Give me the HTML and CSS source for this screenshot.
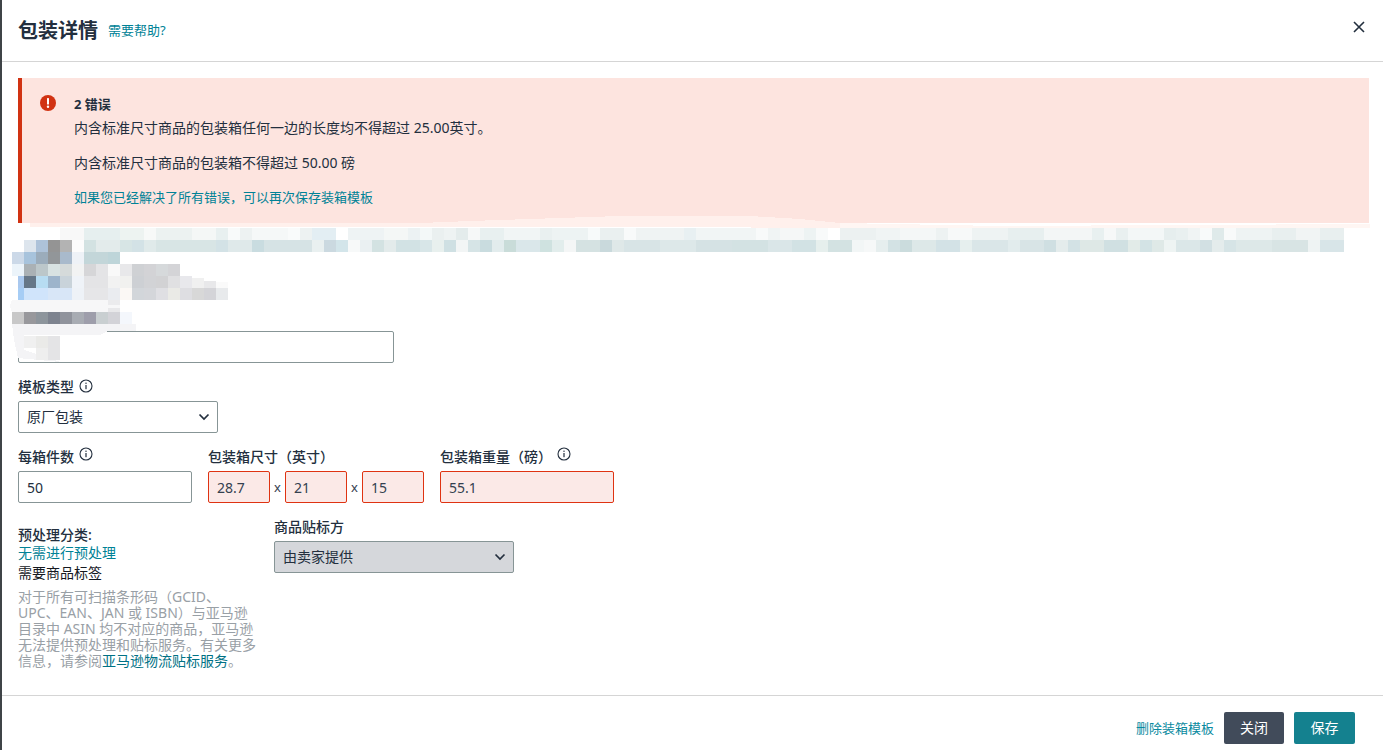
FILE: index.html
```html
<!DOCTYPE html>
<html lang="zh-CN">
<head>
<meta charset="utf-8">
<title>包装详情</title>
<link rel="stylesheet" href="styles.css">
</head>
<body>
<div class="modal">
  <header class="modal-head">
    <h1 class="modal-title">包装详情</h1>
    <a class="link help-link">需要帮助?</a>
    <svg class="close-icon" width="14" height="14" viewBox="0 0 14 14"><path d="M2 2l10 10M12 2L2 12" fill="none" stroke="#232f3e" stroke-width="1.6"/></svg>
  </header>
  <main class="modal-body">
    <section class="alert">
      <svg class="alert-icon" width="16" height="16" viewBox="0 0 16 16"><circle cx="8" cy="8" r="8" fill="#d13212"/><rect x="7" y="3" width="2" height="6.5" rx="0.6" fill="#fff"/><circle cx="8" cy="11.8" r="1.2" fill="#fff"/></svg>
      <div class="alert-text">
        <strong class="alert-title">2 错误</strong>
        <p class="alert-line">内含标准尺寸商品的包装箱任何一边的长度均不得超过 25.00英寸。</p>
        <p class="alert-line spaced">内含标准尺寸商品的包装箱不得超过 50.00 磅</p>
        <a class="link alert-link">如果您已经解决了所有错误&#xFF0C;可以再次保存装箱模板</a>
      </div>
    </section>

    <input class="field name-field" type="text" aria-label="模板名称">

    <div class="label type-label">模板类型
      <svg class="info" width="14" height="14" viewBox="0 0 14 14"><circle cx="7" cy="7" r="6" fill="none" stroke="#232f3e" stroke-width="1.1"/><rect x="6.4" y="6" width="1.2" height="4.2" fill="#232f3e"/><rect x="6.4" y="3.6" width="1.2" height="1.3" fill="#232f3e"/></svg>
    </div>
    <div class="select type-select">
      <span>原厂包装</span>
      <svg width="12" height="8" viewBox="0 0 12 8"><path d="M1.5 1.5L6 6l4.5-4.5" fill="none" stroke="#232f3e" stroke-width="1.7"/></svg>
    </div>

    <div class="measure-row">
      <div class="measure count">
        <div class="label">每箱件数
          <svg class="info" width="14" height="14" viewBox="0 0 14 14"><circle cx="7" cy="7" r="6" fill="none" stroke="#232f3e" stroke-width="1.1"/><rect x="6.4" y="6" width="1.2" height="4.2" fill="#232f3e"/><rect x="6.4" y="3.6" width="1.2" height="1.3" fill="#232f3e"/></svg>
        </div>
        <input class="field full" type="text" value="50" aria-label="每箱件数">
      </div>
      <div class="measure dims">
        <div class="label">包装箱尺寸&#xFF08;英寸&#xFF09;</div>
        <div class="dim-inputs">
          <input class="field error dim" type="text" value="28.7" aria-label="长">
          <span class="times">x</span>
          <input class="field error dim" type="text" value="21" aria-label="宽">
          <span class="times">x</span>
          <input class="field error dim" type="text" value="15" aria-label="高">
        </div>
      </div>
      <div class="measure weight">
        <div class="label">包装箱重量&#xFF08;磅&#xFF09;
          <svg class="info" width="14" height="14" viewBox="0 0 14 14"><circle cx="7" cy="7" r="6" fill="none" stroke="#232f3e" stroke-width="1.1"/><rect x="6.4" y="6" width="1.2" height="4.2" fill="#232f3e"/><rect x="6.4" y="3.6" width="1.2" height="1.3" fill="#232f3e"/></svg>
        </div>
        <input class="field error full" type="text" value="55.1" aria-label="包装箱重量">
      </div>
    </div>

    <div class="prep-row">
      <div class="prep">
        <div class="label">预处理分类:</div>
        <a class="link prep-link">无需进行预处理</a>
        <div class="prep-need">需要商品标签</div>
        <p class="prep-note">对于所有可扫描条形码&#xFF08;GCID、<br>UPC、EAN、JAN 或 ISBN&#xFF09;与亚马逊<br>目录中 ASIN 均不对应的商品&#xFF0C;亚马逊<br>无法提供预处理和贴标服务。有关更多<br>信息&#xFF0C;请参阅<a class="link note-link">亚马逊物流贴标服务</a>。</p>
      </div>
      <div class="labeler">
        <div class="label">商品贴标方</div>
        <div class="select labeler-select">
          <span>由卖家提供</span>
          <svg width="12" height="8" viewBox="0 0 12 8"><path d="M1.5 1.5L6 6l4.5-4.5" fill="none" stroke="#232f3e" stroke-width="1.7"/></svg>
        </div>
      </div>
    </div>
  </main>
  <footer class="modal-foot">
    <a class="link delete-link">删除装箱模板</a>
    <button class="btn btn-dark" type="button">关闭</button>
    <button class="btn btn-teal" type="button">保存</button>
  </footer>
  <svg class="mosaic" width="1383" height="750" viewBox="0 0 1383 750" aria-hidden="true">
    <path d="M30 223H420L470 221L620 216H750L800 219L840 223V229L800 228L700 227H30Z" fill="#fff0ec"/>
    <path d="M840 223L1000 226L1370 224V228H840Z" fill="#fff6f3"/>
    <g>
      <rect x="60" y="228" width="24" height="12" fill="#f8f8f8"/>
      <rect x="84" y="228" width="36" height="12" fill="#e6efef"/><rect x="120" y="228" width="24" height="12" fill="#edf3f1"/><rect x="144" y="228" width="12" height="12" fill="#f7f9f8"/><rect x="156" y="228" width="36" height="12" fill="#ecf2f1"/><rect x="192" y="228" width="24" height="12" fill="#f4f7f6"/><rect x="216" y="228" width="12" height="12" fill="#e8f0f0"/><rect x="228" y="228" width="12" height="12" fill="#f8fafa"/><rect x="240" y="228" width="12" height="12" fill="#edf2f2"/><rect x="252" y="228" width="36" height="12" fill="#f5f8f8"/><rect x="288" y="228" width="12" height="12" fill="#f9fbfb"/><rect x="300" y="228" width="12" height="12" fill="#edf2f2"/><rect x="312" y="228" width="24" height="12" fill="#e3eef3"/><rect x="336" y="228" width="12" height="12" fill="#ffffff"/><rect x="348" y="228" width="36" height="12" fill="#eef3f4"/><rect x="384" y="228" width="24" height="12" fill="#f4f7f6"/><rect x="408" y="228" width="12" height="12" fill="#ecf2f3"/>
      <rect x="420" y="228" width="12" height="12" fill="#f3f8f8"/><rect x="432" y="228" width="12" height="12" fill="#eaf0f0"/><rect x="444" y="228" width="12" height="12" fill="#eef3f3"/><rect x="456" y="228" width="12" height="12" fill="#e4ecec"/><rect x="468" y="228" width="12" height="12" fill="#f6f8f8"/><rect x="480" y="228" width="24" height="12" fill="#e8f0f0"/><rect x="504" y="228" width="36" height="12" fill="#f1f5f5"/><rect x="540" y="228" width="12" height="12" fill="#e9f0f0"/><rect x="552" y="228" width="36" height="12" fill="#edf3f3"/><rect x="588" y="228" width="12" height="12" fill="#f7fafa"/><rect x="600" y="228" width="24" height="12" fill="#eaf0f0"/><rect x="624" y="228" width="12" height="12" fill="#f8fafa"/><rect x="636" y="228" width="48" height="12" fill="#eff3f3"/><rect x="684" y="228" width="12" height="12" fill="#e8f0f2"/><rect x="696" y="228" width="60" height="12" fill="#f1f5f5"/><rect x="756" y="228" width="12" height="12" fill="#f8fafa"/><rect x="768" y="228" width="12" height="12" fill="#f0f4f4"/><rect x="780" y="228" width="24" height="12" fill="#f5f7f7"/><rect x="804" y="228" width="12" height="12" fill="#edf3f3"/><rect x="816" y="228" width="12" height="12" fill="#f8fafa"/><rect x="828" y="228" width="12" height="12" fill="#ffffff"/>
      <rect x="840" y="228" width="36" height="12" fill="#ecf1f1"/><rect x="876" y="228" width="24" height="12" fill="#f0f4f4"/><rect x="900" y="228" width="36" height="12" fill="#f4f7f7"/><rect x="936" y="228" width="12" height="12" fill="#edf2f2"/><rect x="948" y="228" width="24" height="12" fill="#f7f9f9"/><rect x="972" y="228" width="36" height="12" fill="#eef3f3"/><rect x="1008" y="228" width="36" height="12" fill="#e7efef"/><rect x="1044" y="228" width="48" height="12" fill="#f3f6f6"/><rect x="1092" y="228" width="12" height="12" fill="#e8f0f0"/><rect x="1104" y="228" width="12" height="12" fill="#f6f8f8"/><rect x="1116" y="228" width="12" height="12" fill="#e9f0f0"/><rect x="1128" y="228" width="36" height="12" fill="#f3f7f7"/><rect x="1164" y="228" width="12" height="12" fill="#e6eeee"/><rect x="1176" y="228" width="12" height="12" fill="#e9f0f0"/><rect x="1188" y="228" width="12" height="12" fill="#f0f4f4"/><rect x="1200" y="228" width="12" height="12" fill="#f8fafa"/><rect x="1212" y="228" width="12" height="12" fill="#dfeaea"/><rect x="1224" y="228" width="12" height="12" fill="#f8fafa"/><rect x="1236" y="228" width="36" height="12" fill="#eef3f3"/><rect x="1272" y="228" width="24" height="12" fill="#e8efef"/><rect x="1296" y="228" width="24" height="12" fill="#f1f4f4"/><rect x="1320" y="228" width="24" height="12" fill="#e8efef"/>

      <rect x="24" y="240" width="12" height="12" fill="#dde5ed"/><rect x="36" y="240" width="12" height="12" fill="#adc2d9"/><rect x="48" y="240" width="12" height="12" fill="#949494"/><rect x="60" y="240" width="12" height="12" fill="#b3b3b3"/><rect x="72" y="240" width="12" height="12" fill="#fcfcfc"/>
      <rect x="84" y="240" width="12" height="12" fill="#d3e2e2"/><rect x="96" y="240" width="24" height="12" fill="#e3ebeb"/><rect x="120" y="240" width="12" height="12" fill="#d7e5e5"/><rect x="132" y="240" width="12" height="12" fill="#d3e2e6"/><rect x="144" y="240" width="12" height="12" fill="#e0eaea"/><rect x="156" y="240" width="60" height="12" fill="#d8e5e5"/><rect x="216" y="240" width="12" height="12" fill="#d3e2e6"/><rect x="228" y="240" width="24" height="12" fill="#dfe9ea"/><rect x="252" y="240" width="12" height="12" fill="#c9dce0"/><rect x="264" y="240" width="48" height="12" fill="#d6e3e5"/><rect x="312" y="240" width="12" height="12" fill="#e9f0f0"/><rect x="324" y="240" width="12" height="12" fill="#cbd9e0"/><rect x="336" y="240" width="12" height="12" fill="#d3e5ea"/><rect x="348" y="240" width="12" height="12" fill="#f7f9f9"/><rect x="360" y="240" width="12" height="12" fill="#eaf0f2"/><rect x="372" y="240" width="12" height="12" fill="#d3e2e2"/><rect x="384" y="240" width="12" height="12" fill="#e3ebeb"/><rect x="396" y="240" width="24" height="12" fill="#d2e2e4"/>
      <rect x="420" y="240" width="12" height="12" fill="#d8e6e8"/><rect x="432" y="240" width="12" height="12" fill="#e8f0ee"/><rect x="444" y="240" width="12" height="12" fill="#cfe0e3"/><rect x="456" y="240" width="12" height="12" fill="#f2f5f5"/><rect x="468" y="240" width="12" height="12" fill="#d6e4e6"/><rect x="480" y="240" width="12" height="12" fill="#c9dcdf"/><rect x="492" y="240" width="12" height="12" fill="#e2eced"/><rect x="504" y="240" width="12" height="12" fill="#c9dcd9"/><rect x="516" y="240" width="24" height="12" fill="#dae7ea"/><rect x="540" y="240" width="12" height="12" fill="#cfe2e0"/><rect x="552" y="240" width="12" height="12" fill="#e2edec"/><rect x="564" y="240" width="12" height="12" fill="#f4f6f6"/><rect x="576" y="240" width="24" height="12" fill="#d5e2e2"/><rect x="600" y="240" width="12" height="12" fill="#c9d9dc"/><rect x="612" y="240" width="12" height="12" fill="#dfe8e8"/><rect x="624" y="240" width="36" height="12" fill="#d8e4e6"/><rect x="660" y="240" width="36" height="12" fill="#dde8e9"/><rect x="696" y="240" width="36" height="12" fill="#d5e2e4"/><rect x="732" y="240" width="36" height="12" fill="#d3e2e3"/><rect x="768" y="240" width="24" height="12" fill="#dae6e8"/><rect x="792" y="240" width="24" height="12" fill="#d2e2e4"/><rect x="816" y="240" width="12" height="12" fill="#e6efed"/><rect x="828" y="240" width="24" height="12" fill="#d3e2e2"/>
      <rect x="852" y="240" width="12" height="12" fill="#f2f6f6"/><rect x="864" y="240" width="12" height="12" fill="#f6f8f8"/><rect x="876" y="240" width="12" height="12" fill="#e6eeee"/><rect x="888" y="240" width="12" height="12" fill="#d3e2e4"/><rect x="900" y="240" width="12" height="12" fill="#cbdcdd"/><rect x="912" y="240" width="24" height="12" fill="#dde8e8"/><rect x="936" y="240" width="24" height="12" fill="#d3e2e6"/><rect x="960" y="240" width="12" height="12" fill="#e6efee"/><rect x="972" y="240" width="36" height="12" fill="#dae6e8"/><rect x="1008" y="240" width="12" height="12" fill="#e2eced"/><rect x="1020" y="240" width="24" height="12" fill="#d8e4e6"/><rect x="1044" y="240" width="12" height="12" fill="#cfdfe2"/><rect x="1056" y="240" width="12" height="12" fill="#e4ecec"/><rect x="1068" y="240" width="12" height="12" fill="#d3e2e5"/><rect x="1080" y="240" width="24" height="12" fill="#dee8e6"/><rect x="1104" y="240" width="24" height="12" fill="#d0e0e2"/><rect x="1128" y="240" width="12" height="12" fill="#e2ebe8"/><rect x="1140" y="240" width="12" height="12" fill="#d3e3e5"/><rect x="1152" y="240" width="12" height="12" fill="#dfe9e7"/><rect x="1164" y="240" width="12" height="12" fill="#eef4f3"/><rect x="1176" y="240" width="24" height="12" fill="#dbe7e8"/><rect x="1200" y="240" width="12" height="12" fill="#d2e0e3"/><rect x="1212" y="240" width="12" height="12" fill="#e4ecec"/><rect x="1224" y="240" width="12" height="12" fill="#d6e4e6"/><rect x="1236" y="240" width="36" height="12" fill="#dde8e8"/><rect x="1272" y="240" width="36" height="12" fill="#d8e4e4"/><rect x="1308" y="240" width="12" height="12" fill="#eef3f3"/><rect x="1320" y="240" width="24" height="12" fill="#d8e5e8"/>

      <rect x="12" y="252" width="12" height="12" fill="#ccd9e8"/><rect x="24" y="252" width="12" height="12" fill="#a7c3dc"/><rect x="36" y="252" width="12" height="12" fill="#9bacbb"/><rect x="48" y="252" width="12" height="12" fill="#929699"/><rect x="60" y="252" width="12" height="12" fill="#a9bacc"/><rect x="72" y="252" width="12" height="12" fill="#eef2f7"/><rect x="84" y="252" width="24" height="12" fill="#c3d6d9"/><rect x="108" y="252" width="12" height="12" fill="#bed5d9"/>

      <rect x="12" y="264" width="12" height="12" fill="#ecf4fa"/><rect x="24" y="264" width="12" height="12" fill="#aab1b5"/><rect x="36" y="264" width="12" height="12" fill="#bcc7ca"/><rect x="48" y="264" width="12" height="12" fill="#d8e2e2"/><rect x="60" y="264" width="12" height="12" fill="#d5dada"/><rect x="72" y="264" width="12" height="12" fill="#f2f3f3"/><rect x="84" y="264" width="12" height="12" fill="#d6d6d8"/><rect x="96" y="264" width="12" height="12" fill="#e4e4e6"/><rect x="108" y="264" width="12" height="12" fill="#f9f9f9"/><rect x="120" y="264" width="12" height="12" fill="#e8e8ea"/><rect x="132" y="264" width="12" height="12" fill="#cfd1d4"/><rect x="144" y="264" width="12" height="12" fill="#d3d3d6"/><rect x="156" y="264" width="12" height="12" fill="#d6d9db"/><rect x="168" y="264" width="12" height="12" fill="#d4d4d7"/>

      <rect x="18" y="276" width="6" height="12" fill="#a9c8ee"/><rect x="24" y="276" width="12" height="12" fill="#667788"/><rect x="36" y="276" width="12" height="12" fill="#b7dcf2"/><rect x="48" y="276" width="12" height="12" fill="#9db4cb"/><rect x="60" y="276" width="12" height="12" fill="#c9d3da"/><rect x="72" y="276" width="12" height="12" fill="#eff3f8"/><rect x="84" y="276" width="24" height="12" fill="#e4e4e6"/><rect x="108" y="276" width="12" height="12" fill="#f2f2f2"/><rect x="120" y="276" width="12" height="12" fill="#f1f1ef"/><rect x="132" y="276" width="12" height="12" fill="#cdd0d4"/><rect x="144" y="276" width="12" height="12" fill="#d2d3d6"/><rect x="156" y="276" width="12" height="12" fill="#d2d2d4"/><rect x="168" y="276" width="12" height="12" fill="#e0e0e2"/><rect x="180" y="276" width="12" height="12" fill="#e8e8ec"/><rect x="192" y="278" width="12" height="10" fill="#f0f0f0"/><rect x="204" y="281" width="12" height="7" fill="#e8e8ea"/><rect x="216" y="282" width="12" height="6" fill="#fafafa"/>

      <rect x="18" y="288" width="6" height="12" fill="#a6cdf5"/><rect x="24" y="288" width="24" height="12" fill="#d0e4fb"/><rect x="48" y="288" width="24" height="12" fill="#d8e6f7"/><rect x="72" y="288" width="12" height="12" fill="#eef2f7"/><rect x="84" y="288" width="24" height="12" fill="#e6e6e8"/><rect x="108" y="288" width="12" height="12" fill="#eaecf0"/><rect x="120" y="288" width="12" height="12" fill="#fbf8f5"/><rect x="132" y="288" width="12" height="12" fill="#d2d6da"/><rect x="144" y="288" width="12" height="12" fill="#d4d6da"/><rect x="156" y="288" width="12" height="12" fill="#dfdfe3"/><rect x="168" y="288" width="12" height="12" fill="#eaeae6"/><rect x="180" y="288" width="12" height="12" fill="#dedee2"/><rect x="192" y="288" width="12" height="12" fill="#d8d8d8"/><rect x="204" y="288" width="12" height="12" fill="#d4d4d8"/><rect x="216" y="288" width="12" height="12" fill="#e8eaec"/>

      <path d="M12 300H108V305H120V312H12L10 306Z" fill="#f7f7f8"/>
      <rect x="108" y="300" width="12" height="5" fill="#ebebed"/>
      <rect x="108" y="308" width="12" height="4" fill="#e8e8ea"/>

      <rect x="12" y="312" width="12" height="12" fill="#c8c8c8"/><rect x="24" y="312" width="12" height="12" fill="#98989c"/><rect x="36" y="312" width="12" height="12" fill="#8d959c"/><rect x="48" y="312" width="12" height="12" fill="#7d838f"/><rect x="60" y="312" width="12" height="12" fill="#90939c"/><rect x="72" y="312" width="12" height="12" fill="#a8acb3"/><rect x="84" y="312" width="12" height="12" fill="#9e9eab"/><rect x="96" y="312" width="12" height="12" fill="#c9cfd1"/><rect x="108" y="312" width="12" height="12" fill="#d3d3d8"/><rect x="120" y="312" width="12" height="12" fill="#f4f7fc"/>

      <path d="M12 324H136V331H108L100 335H24V350L60 362L18 358L14 340Z" fill="#f4f4f6"/>
      <rect x="24" y="336" width="12" height="12" fill="#f0f0f0"/><rect x="36" y="336" width="12" height="12" fill="#eaeae8"/><rect x="36" y="348" width="12" height="12" fill="#eeeeee"/><rect x="48" y="336" width="12" height="24" fill="#e4e4e6"/>
    </g>
  </svg>
</div>
</body>
</html>
```
FILE: styles.css
```css
* { box-sizing: border-box; }
html, body { margin: 0; height: 100%; overflow: hidden; }
body {
  background: #fff;
  color: #16191f;
  font-family: "Noto Sans", "Noto Sans CJK SC", sans-serif;
  font-size: 14px;
  line-height: 20px;
}
.modal {
  position: relative;
  height: 750px;
  display: flex;
  flex-direction: column;
  border-left: 2px solid #3f4447;
}
.modal-head {
  height: 62px;
  flex: none;
  display: flex;
  align-items: center;
  padding: 0 17px 2px 16px;
  border-bottom: 1px solid #d5d5d5;
}
.modal-title {
  margin: 2px 0 0;
  font-size: 20px;
  font-weight: 700;
  color: #232f3e;
}
.help-link { margin-left: 10px; font-size: 13px; }
.close-icon { margin-left: auto; margin-top: -5px; }
.link { color: #008296; }
.modal-body { flex: 1; padding: 16px 14px 0 16px; }
.alert {
  height: 145px;
  display: flex;
  padding: 17px 0 0 18px;
  background: #fde4df;
  border-left: 4px solid #d13212;
}
.alert-icon { flex: none; margin-right: 18px; }
.alert-text { display: flex; flex-direction: column; align-items: flex-start; font-size: 14px; color: #232f3e; }
.alert-title { line-height: 18px; font-weight: 700; font-size: 13px; }
.alert-line { margin: 5px 0 0; font-size: 14px; line-height: 20px; }
.alert-line.spaced { margin-top: 15px; }
.alert-link { margin-top: 14px; font-size: 13px; line-height: 20px; }
.field {
  display: block;
  height: 32px;
  padding: 0 8px;
  border: 1px solid #879596;
  border-radius: 2px;
  background: #fff;
  color: #232f3e;
  font: inherit;
  outline: none;
}
.field.error { background: #fbe9e7; border-color: #df3312; color: #34404f; }
.field.full { width: 100%; }
.name-field { width: 376px; margin-top: 108px; }
.label {
  display: flex;
  align-items: center;
  font-weight: 500;
  font-size: 14px;
  line-height: 18px;
  color: #232f3e;
}
.info { margin-left: 5px; margin-top: -3px; }
.type-label { margin-top: 15px; height: 18px; }
.select {
  display: flex;
  align-items: center;
  justify-content: space-between;
  height: 32px;
  padding: 0 7px 0 8px;
  border: 1px solid #879596;
  border-radius: 2px;
  color: #232f3e;
  font-size: 14px;
}
.type-select { width: 200px; margin-top: 5px; }
.measure-row { display: flex; gap: 16px; margin-top: 13px; }
.measure .label { height: 25px; padding-bottom: 4px; }
.measure .info { margin-top: -6px; }
.count { width: 174px; }
.dims { width: 216px; }
.weight { width: 174px; }
.dim-inputs { display: flex; align-items: center; }
.dim { width: 62px; }
.times { width: 15px; text-align: center; font-size: 13px; color: #34404f; }
.prep-row { display: flex; margin-top: 14px; }
.prep { width: 240px; margin-top: 9px; font-size: 13px; flex: none; }
.prep .label { line-height: 17px; }
.prep-link { display: block; line-height: 20px; font-size: 14px; }
.prep-need { line-height: 20px; font-size: 14px; color: #16191f; }
.prep-note { margin: 6px 0 0; font-size: 14px; line-height: 16px; color: #99a0a6; white-space: nowrap; }
.note-link { font-weight: 400; color: #007185; }
.labeler { width: 240px; margin-left: 16px; }
.labeler .label { height: 24px; padding-bottom: 4px; }
.labeler-select { background: #d5d7db; border-color: #879596; }
.modal-foot {
  height: 55px;
  flex: none;
  display: flex;
  align-items: center;
  justify-content: flex-end;
  padding: 16px 28px 6px 0;
  border-top: 1px solid #d5d5d5;
}
.delete-link { margin-right: 10px; font-size: 13px; color: #0a8aa0; }
.btn {
  height: 32px;
  border: none;
  border-radius: 2px;
  color: #fff;
  font: inherit;
  font-size: 14px;
  width: 60px;
}
.btn-dark { background: #414b5a; }
.btn-teal { background: #14818f; width: 61px; margin-left: 10px; }
.mosaic {
  position: absolute;
  left: -2px;
  top: 0;
  pointer-events: none;
  shape-rendering: crispEdges;
}
```
